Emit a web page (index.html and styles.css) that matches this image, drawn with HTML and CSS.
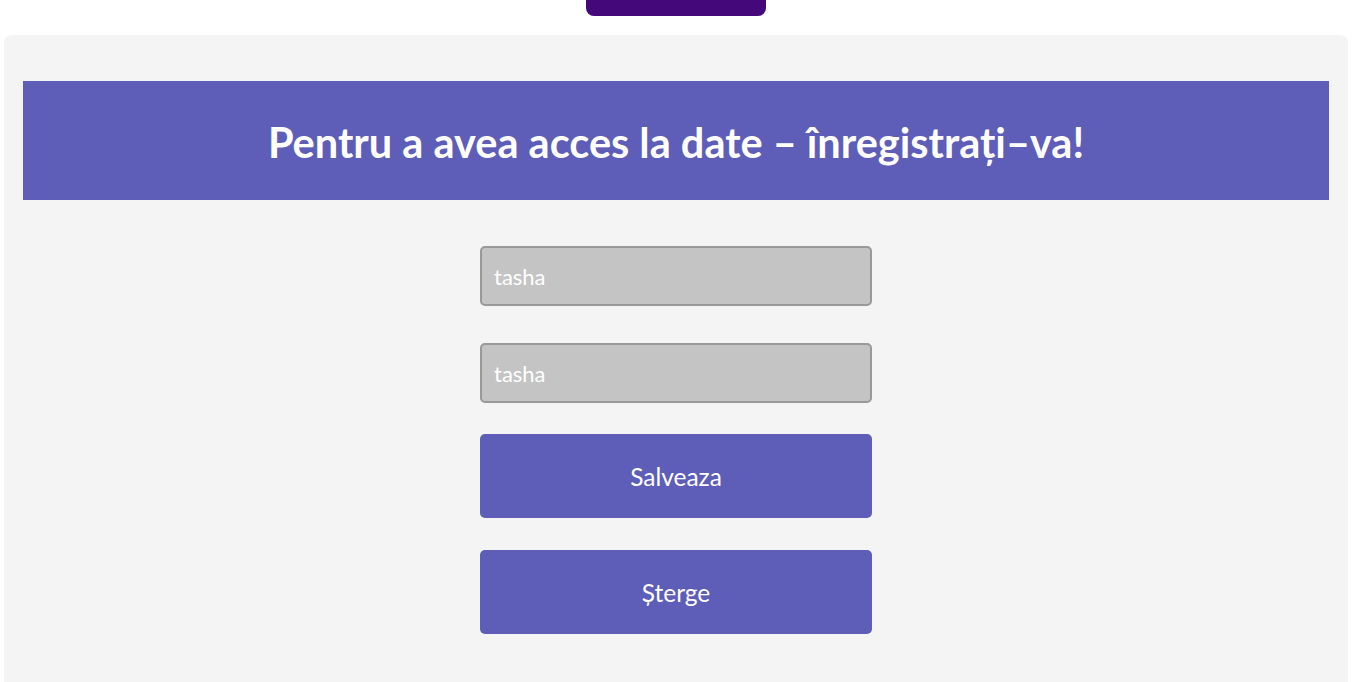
FILE: index.html
```html
<!DOCTYPE html>
<html lang="ro">
<head>
<meta charset="utf-8">
<title>Înregistrare</title>
<link rel="stylesheet" href="styles.css">
</head>
<body>
<div class="top">
  <div class="tab"></div>
</div>
<main class="card">
  <div class="banner">
    <h1 class="title">Pentru a avea acces la date – înregistrați–va!</h1>
  </div>
  <form class="form">
    <input class="field" type="text" value="tasha">
    <input class="field field-second" type="text" value="tasha">
    <button class="btn btn-save" type="button">Salveaza</button>
    <button class="btn btn-delete" type="button">Șterge</button>
  </form>
</main>
</body>
</html>
```
FILE: styles.css
```css
html, body {
  margin: 0;
  padding: 0;
  background: #ffffff;
  font-family: "Lato", "Noto Sans", sans-serif;
  overflow: hidden;
}
.top {
  display: flex;
  justify-content: center;
  height: 16px;
  padding-right: 16px;
}
.tab {
  width: 180px;
  height: 16px;
  background: #45087a;
  border-radius: 0 0 8px 8px;
}
.card {
  margin: 19px 20px 0 4px;
  background: #f4f4f4;
  border-radius: 8px 8px 0 0;
  padding: 46px 19px 48px 19px;
  height: 647px;
  box-sizing: border-box;
}
.banner {
  background: #5e5db7;
  height: 119px;
  display: flex;
  align-items: center;
  justify-content: center;
}
.title {
  margin: 0;
  color: #ffffff;
  font-size: 41.5px;
  font-weight: 700;
  padding-top: 2px;
}
.form {
  display: flex;
  flex-direction: column;
  align-items: center;
  padding-top: 46px;
}
.field {
  width: 392px;
  height: 60px;
  box-sizing: border-box;
  background: #c4c4c4;
  border: 2px solid #999999;
  border-radius: 5px;
  color: #ffffff;
  font-family: inherit;
  font-size: 22px;
  padding: 0 12px;
  outline: none;
}
.field-second {
  margin-top: 37px;
}
.btn {
  width: 392px;
  height: 84px;
  border: none;
  border-radius: 5px;
  background: #5e5db7;
  color: #ffffff;
  font-family: inherit;
  font-size: 24.5px;
  padding: 0;
}
.btn-save {
  margin-top: 31px;
}
.btn-delete {
  margin-top: 32px;
}
```
